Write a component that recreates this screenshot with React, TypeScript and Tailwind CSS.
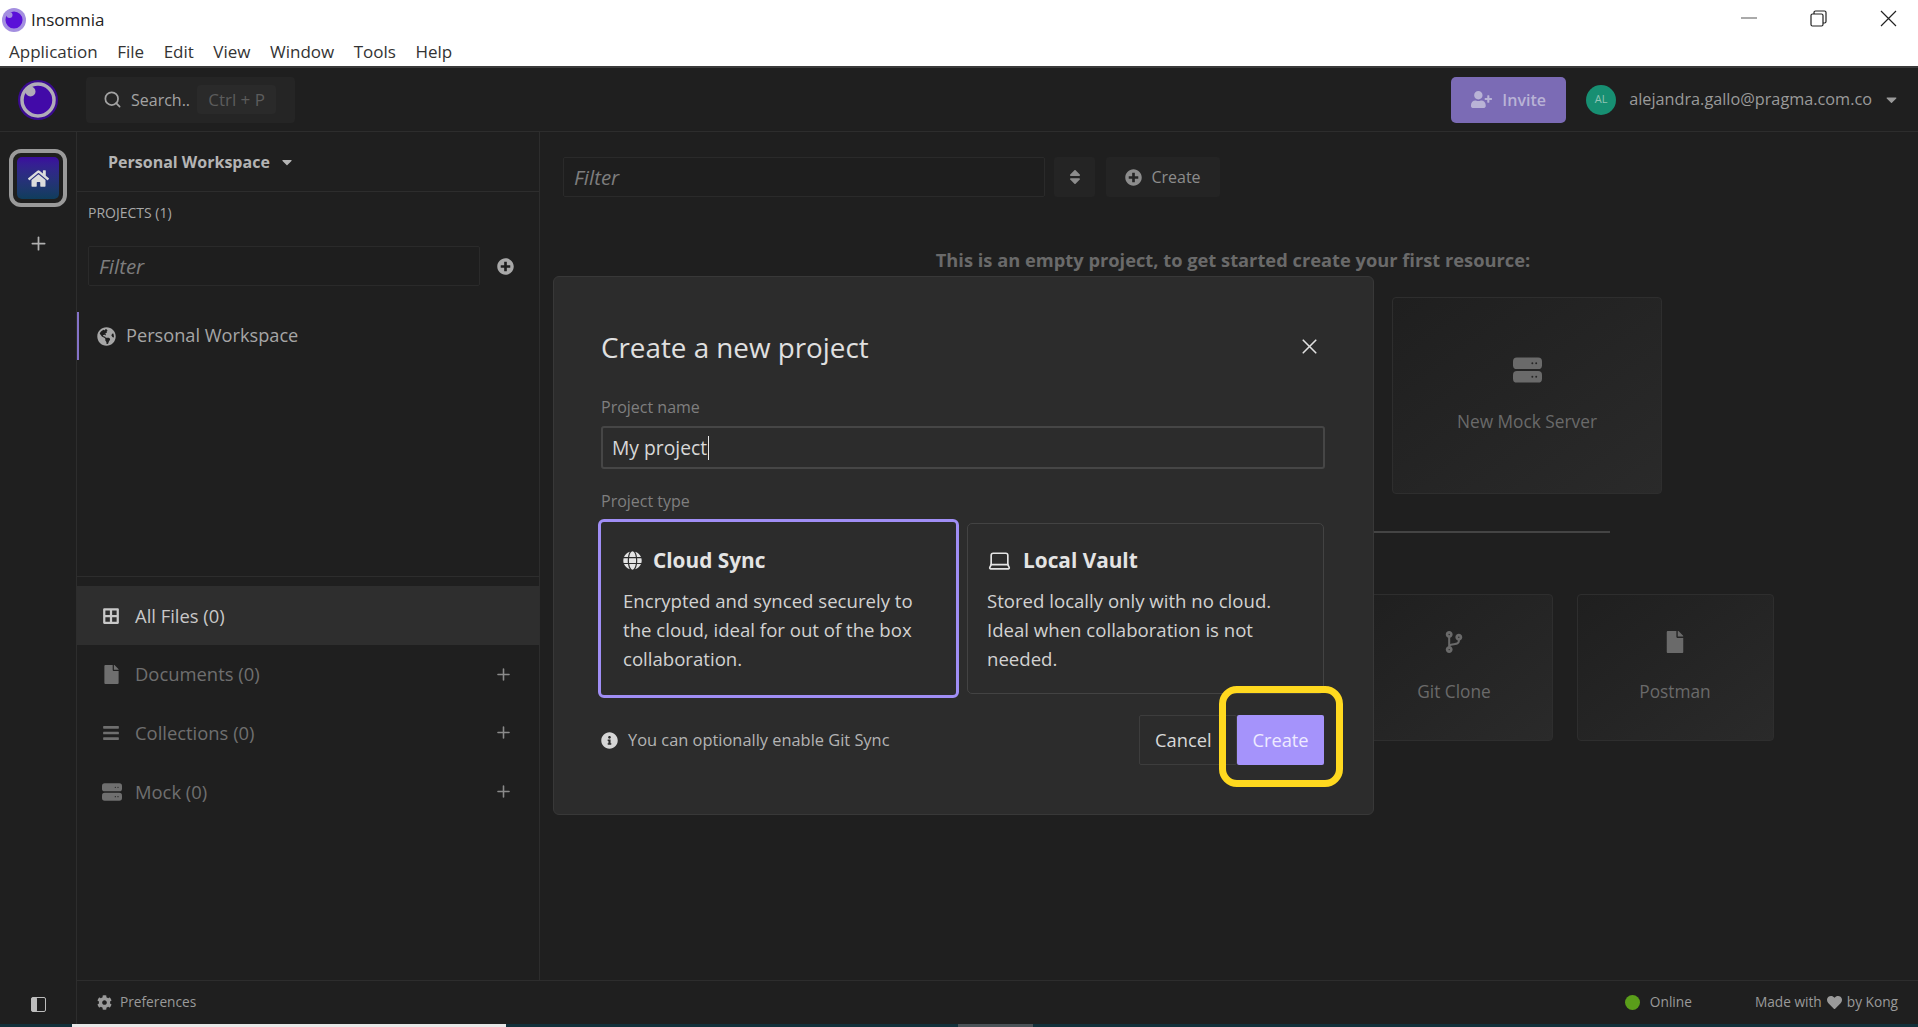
import { Laptop, Plus, X, Search } from "lucide-react";
import {
  FaBars,
  FaBorderAll,
  FaCaretDown,
  FaCodeBranch,
  FaCog,
  FaFile,
  FaGlobe,
  FaGlobeAmericas,
  FaHeart,
  FaHome,
  FaInfoCircle,
  FaPlusCircle,
  FaSort,
  FaUserPlus,
} from "react-icons/fa";

const menuItems = ["Application", "File", "Edit", "View", "Window", "Tools", "Help"];

function Logo({ size, ring = "#b0acb8", edge = "#3a0a90", fill = "#420aa8" }: { size: number; ring?: string; edge?: string; fill?: string }) {
  return (
    <svg width={size} height={size} viewBox="0 0 40 40">
      <circle cx="20" cy="20" r="20" fill={edge} />
      <circle cx="20" cy="20" r="16" fill={fill} stroke={ring} strokeWidth="3.5" />
      <circle cx="12.5" cy="11.5" r="5" fill={ring} />
    </svg>
  );
}

function MockIcon({ className }: { className?: string }) {
  return (
    <svg viewBox="0 0 30 26" className={className} fill="currentColor">
      <rect x="0" y="0" width="30" height="12" rx="4" />
      <rect x="0" y="14" width="30" height="12" rx="4" />
      <circle cx="20" cy="6" r="1" fill="#262626" />
      <circle cx="24" cy="6" r="1" fill="#262626" />
      <circle cx="20" cy="20" r="1" fill="#262626" />
      <circle cx="24" cy="20" r="1" fill="#262626" />
    </svg>
  );
}

function FilterInput({ className }: { className: string }) {
  return (
    <div className={`flex items-center border border-[#2a2a2a] bg-[#1e1e1e] rounded-[2px] px-[10px] italic text-[20.5px] text-[#7d7d7d] ${className}`}>
      Filter
    </div>
  );
}

function NavRow({ icon, label, active }: { icon: React.ReactNode; label: string; active?: boolean }) {
  return (
    <div className={`flex items-center h-[58.7px] pl-[25px] pr-[26px] text-[18.4px] ${active ? "bg-[#2e2e2e] text-[#c8c8c8]" : "text-[#6f6f6f]"}`}>
      <span className="w-[33px] flex items-center">{icon}</span>
      <span className="flex-1">{label}</span>
      {!active && <Plus size={19} strokeWidth={2} className="text-[#8a8a8a]" />}
    </div>
  );
}

function GhostCard({ icon, label, className }: { icon: React.ReactNode; label: string; className: string }) {
  return (
    <div className={`flex flex-col items-center justify-center gap-[26px] border border-[#2e2e2e] rounded-[4px] bg-gradient-to-br from-[#1f1f1f] to-[#2a2a2a] text-[17.3px] text-[#6a6a6a] ${className}`}>
      {icon}
      <span>{label}</span>
    </div>
  );
}

function TypeCard({ icon, title, body, selected }: { icon: React.ReactNode; title: string; body: string; selected?: boolean }) {
  return (
    <div
      className={
        selected
          ? "w-[361px] h-[179px] border-[3px] border-[#a08ef5] rounded-[6px] pl-[22px] pr-[20px] pt-[25px]"
          : "w-[357px] h-[171px] border border-[#434343] rounded-[5px] pl-[19px] pr-[19px] pt-[23px]"
      }
    >
      <div className="flex items-center gap-[11px] text-[20.8px] font-bold text-[#e4e4e4] leading-[26px]">
        {icon}
        {title}
      </div>
      <p className="mt-[13px] text-[18.6px] leading-[29px] text-[#d2d2d2]">{body}</p>
    </div>
  );
}

export default function App() {
  return (
    <div className="relative h-screen w-full flex flex-col overflow-hidden bg-[#1f1f1f] font-['Open_Sans',sans-serif]">
      {/* window chrome */}
      <div className="h-[66px] shrink-0 bg-white text-[#222]">
        <div className="h-[39px] flex items-center">
          <div className="ml-[2px] flex">
            <Logo size={24} ring="#a48fe0" edge="#a48fe0" fill="#5a10d8" />
          </div>
          <span className="ml-[5px] text-[17px]">Insomnia</span>
          <div className="ml-auto -mt-[3px] pr-[21px] flex items-center gap-[53px]">
            <div className="w-[16px] h-[2px] bg-[#aaa]" />
            <svg width="17" height="17" viewBox="0 0 17 17" fill="none" stroke="#222" strokeWidth="1.2">
              <rect x="1" y="4" width="12" height="12" rx="1.5" />
              <path d="M4 4V2.5A1.5 1.5 0 0 1 5.5 1H14.5A1.5 1.5 0 0 1 16 2.5V11.5A1.5 1.5 0 0 1 14.5 13H13" />
            </svg>
            <svg width="17" height="17" viewBox="0 0 17 17" fill="none" stroke="#222" strokeWidth="1.2">
              <path d="M1 1L16 16M16 1L1 16" />
            </svg>
          </div>
        </div>
        <div className="flex items-center gap-[19.5px] pl-[9px] h-[25px] text-[17px] text-[#333]">
          {menuItems.map(m => (
            <span key={m}>{m}</span>
          ))}
        </div>
      </div>

      {/* app header */}
      <div className="h-[66px] shrink-0 flex items-center border-b border-[#2d2d2d] border-t-2 border-t-[#3a3a3a] pl-[18px] pr-[18px] bg-[#1f1f1f]">
        <Logo size={40} />
        <div className="ml-[28px] w-[209px] h-[46px] flex items-center bg-[#252525] rounded-[4px] pl-[17px] text-[#a3a3a3]">
          <Search size={19} strokeWidth={2.2} />
          <span className="ml-[9px] text-[16px]">Search..</span>
          <span className="ml-[7px] w-[79px] h-[29px] flex items-center justify-center bg-[#2a2a2a] rounded-[4px] text-[17px] text-[#5c5c5c]">Ctrl + P</span>
        </div>
        <div className="ml-auto w-[115px] h-[46px] flex items-center justify-center gap-[10px] rounded-[5px] bg-[#7b6bb5] text-[16px] font-semibold text-[#b9b3d6]">
          <FaUserPlus size={21} />
          Invite
        </div>
        <div className="ml-[20px] w-[30px] h-[30px] rounded-full bg-[#178f72] flex items-center justify-center text-[11px] text-[#8fc4b4]">AL</div>
        <span className="ml-[13px] text-[16.25px] text-[#9a9a9a]">alejandra.gallo@pragma.com.co</span>
        <FaCaretDown size={17} className="ml-[11px] text-[#9a9a9a]" />
      </div>

      <div className="flex-1 flex min-h-0">
        {/* rail */}
        <div className="w-[77px] shrink-0 border-r border-[#2d2d2d] flex flex-col items-center pt-[17px]">
          <div className="w-[58px] h-[58px] rounded-[12px] border-[4px] border-[#9a9a9a] p-[4px]">
            <div className="w-full h-full rounded-[5px] bg-gradient-to-b from-[#3b0a9e] to-[#0f3d5c] flex items-center justify-center text-[#dcdcdc]">
              <FaHome size={21} />
            </div>
          </div>
          <Plus size={21} strokeWidth={2} className="mt-[26px] text-[#b0b0b0]" />
          <div className="mt-auto mb-[12px]">
            <svg width="15" height="15" viewBox="0 0 15 15">
              <rect x="0.5" y="0.5" width="14" height="14" rx="1.5" fill="none" stroke="#bdbdbd" />
              <rect x="0.5" y="0.5" width="5.5" height="14" rx="1" fill="#bdbdbd" />
            </svg>
          </div>
        </div>

        <div className="flex-1 flex flex-col min-w-0">
          <div className="flex-1 flex min-h-0">
            {/* sidebar */}
            <div className="w-[463px] shrink-0 border-r border-[#2d2d2d] flex flex-col">
              <div className="h-[60px] shrink-0 border-b border-[#2d2d2d] flex items-center pl-[31px] text-[16px] font-bold text-[#b4b4b4]">
                Personal Workspace
                <FaCaretDown size={16} className="ml-[9px] text-[#b4b4b4]" />
              </div>
              <div className="pl-[11px] mt-[11px] text-[14px] leading-[20px] text-[#a8a8a8]">PROJECTS (1)</div>
              <div className="flex items-center mt-[23px] pl-[11px]">
                <FilterInput className="w-[392px] h-[40px]" />
                <FaPlusCircle size={17} className="ml-[17px] text-[#a8a8a8]" />
              </div>
              <div className="mt-[26px] h-[48px] flex items-center border-l-2 border-[#8472c8] pl-[18px] text-[18.2px] text-[#a6a6a6]">
                <FaGlobeAmericas size={19} />
                <span className="ml-[10px]">Personal Workspace</span>
              </div>
              <div className="mt-auto border-t border-[#2d2d2d] pt-[9px] pb-[159px]">
                <NavRow active icon={<FaBorderAll size={18} />} label="All Files (0)" />
                <NavRow icon={<FaFile size={19} />} label="Documents (0)" />
                <NavRow icon={<FaBars size={18} />} label="Collections (0)" />
                <NavRow icon={<MockIcon className="w-[20px] h-[18px]" />} label="Mock (0)" />
              </div>
            </div>

            {/* main, dimmed behind the modal */}
            <div className="flex-1 min-w-0 flex flex-col pl-[23px] pt-[25px]">
              <div className="flex items-center">
                <FilterInput className="w-[482px] h-[40px]" />
                <div className="ml-[9px] w-[41px] h-[40px] flex items-center justify-center bg-[#242424] rounded-[3px] text-[#8c8c8c]">
                  <FaSort size={18} />
                </div>
                <div className="ml-[11px] w-[114px] h-[40px] flex items-center justify-center gap-[9px] bg-[#242424] rounded-[3px] text-[16px] text-[#8c8c8c]">
                  <FaPlusCircle size={17} />
                  Create
                </div>
              </div>
              <div className="flex flex-col items-center pr-[15px]">
                <div className="mt-[50px] h-[26px] leading-[26px] text-[18.3px] font-bold text-[#6a6a6a]">This is an empty project, to get started create your first resource:</div>
                <div className="mt-[24px] flex gap-[24px]">
                  <GhostCard className="w-[270px] h-[197px]" icon={<FaFile size={26} />} label="New Document" />
                  <GhostCard className="w-[270px] h-[197px]" icon={<FaBars size={26} />} label="New Collection" />
                  <GhostCard className="w-[270px] h-[197px]" icon={<MockIcon className="w-[29px] h-[26px]" />} label="New Mock Server" />
                </div>
                <div className="mt-[37px] w-[754px] h-[2px] bg-[#444]" />
                <div className="mt-[20px] h-[41px]" />
                <div className="flex gap-[24px]">
                  <GhostCard className="w-[197px] h-[147px]" icon={<FaFile size={22} />} label="File" />
                  <GhostCard className="w-[197px] h-[147px]" icon={<FaFile size={22} />} label="URL" />
                  <GhostCard className="w-[197px] h-[147px]" icon={<FaFile size={22} />} label="Clipboard" />
                  <GhostCard className="w-[197px] h-[147px]" icon={<FaCodeBranch size={22} />} label="Git Clone" />
                  <GhostCard className="w-[197px] h-[147px]" icon={<FaFile size={22} />} label="Postman" />
                </div>
              </div>
            </div>
          </div>

          {/* status bar */}
          <div className="h-[44px] shrink-0 border-t border-[#2d2d2d] flex items-center pl-[20px] pr-[20px] text-[13.7px] text-[#9a9a9a]">
            <FaCog size={15} />
            <span className="ml-[8px]">Preferences</span>
            <span className="ml-auto w-[15px] h-[15px] rounded-full bg-[#5a9e1a]" />
            <span className="ml-[10px]">Online</span>
            <span className="ml-[63px] flex items-center gap-[5px]">
              Made with <FaHeart size={15} /> by Kong
            </span>
          </div>
        </div>
      </div>

      {/* taskbar sliver */}
      <div className="h-[3px] shrink-0 bg-[#12303a] flex">
        <div className="ml-[72px] w-[434px] h-full bg-[#e8e8e8]" />
        <div className="ml-[452px] w-[75px] h-full bg-[#4a5257]" />
      </div>

      {/* modal */}
      <div className="absolute left-[553px] top-[276px] w-[821px] h-[539px] bg-[#2c2c2c] border border-[#383838] rounded-[6px] pl-[47px] pr-[48px] pt-[51px]">
        <div className="flex items-center justify-between h-[40px]">
          <h2 className="text-[27.8px] font-normal text-[#e0e0e0]">Create a new project</h2>
          <X size={25} strokeWidth={1.6} className="text-[#e0e0e0] mr-[3px] -mt-[4px]" />
        </div>
        <div className="mt-[28px] text-[16px] leading-[22px] text-[#7f7f7f]">Project name</div>
        <div className="mt-[8px] h-[43px] flex items-center border-2 border-[#464646] rounded-[3px] pl-[9px] pt-[1px] text-[19.3px] text-[#d8d8d8]">
          My project
          <span className="ml-[1px] w-[1px] h-[24px] bg-[#e8e8e8]" />
        </div>
        <div className="mt-[21px] text-[16px] leading-[22px] text-[#7f7f7f]">Project type</div>
        <div className="mt-[7px] -ml-[3px] flex items-center gap-[8px]">
          <TypeCard
            selected
            icon={<FaGlobe size={19} />}
            title="Cloud Sync"
            body="Encrypted and synced securely to the cloud, ideal for out of the box collaboration."
          />
          <TypeCard
            icon={<Laptop size={25} strokeWidth={1.6} />}
            title="Local Vault"
            body="Stored locally only with no cloud. Ideal when collaboration is not needed."
          />
        </div>
        <div className="mt-[17px] flex items-center">
          <FaInfoCircle size={17} className="text-[#d6d6d6]" />
          <span className="ml-[10px] text-[16.4px] text-[#b4b4b4]">You can optionally enable Git Sync</span>
          <div className="ml-auto mr-[1px] flex items-center">
            <div className="w-[98px] h-[50px] border border-[#3d3d3d] rounded-[2px] flex items-center pl-[15px] text-[18.3px] text-[#d8d8d8]">Cancel</div>
            <div className="w-[87px] h-[50px] bg-[#a593fb] rounded-[2px] flex items-center justify-center text-[18.3px] text-[#eeeaff] relative z-10">Create</div>
          </div>
        </div>
      </div>
      {/* annotation ring drawn over the screenshot */}
      <div className="absolute left-[1219px] top-[686px] w-[124px] h-[101px] border-[7px] border-[#ffd91f] rounded-[18px] z-20" />
    </div>
  );
}
